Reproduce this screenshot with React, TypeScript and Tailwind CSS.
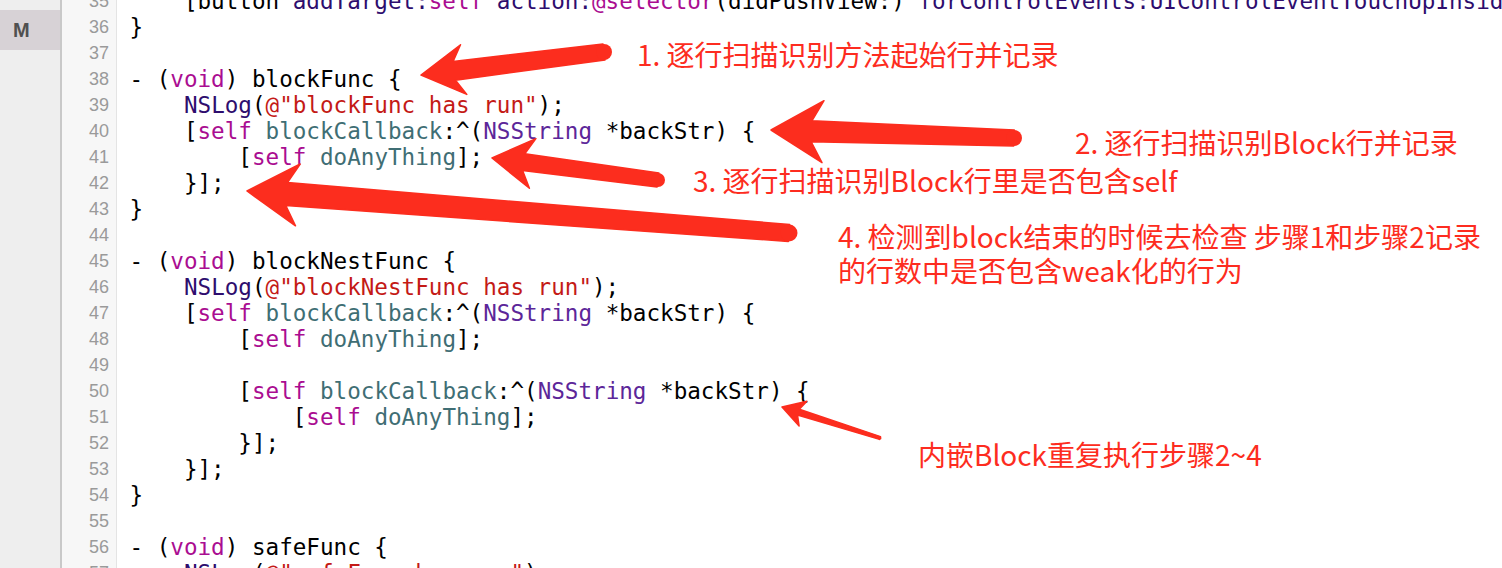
import React from 'react';

type Tok = [string, string?];

const K = '#aa0d91'; // keywords
const S = '#c41a16'; // strings
const P = '#3f6e74'; // project methods
const C = '#5c2699'; // system classes
const F = '#2e0d6e'; // system functions / methods

const lines: { n: number; toks: Tok[] }[] = [
  {
    n: 35,
    toks: [
      ['    [button '],
      ['addTarget:', F],
      ['self', K],
      [' '],
      ['action:', F],
      ['@selector', K],
      ['(didPushView:) '],
      ['forControlEvents:', F],
      ['UIControlEventTouchUpInside', F],
      ['];'],
    ],
  },
  { n: 36, toks: [['}']] },
  { n: 37, toks: [] },
  { n: 38, toks: [['- ('], ['void', K], [') blockFunc {']] },
  { n: 39, toks: [['    '], ['NSLog', F], ['('], ['@"blockFunc has run"', S], [');']] },
  { n: 40, toks: [['    ['], ['self', K], [' '], ['blockCallback', P], [':^('], ['NSString', C], [' *backStr) {']] },
  { n: 41, toks: [['        ['], ['self', K], [' '], ['doAnyThing', P], ['];']] },
  { n: 42, toks: [['    }];']] },
  { n: 43, toks: [['}']] },
  { n: 44, toks: [] },
  { n: 45, toks: [['- ('], ['void', K], [') blockNestFunc {']] },
  { n: 46, toks: [['    '], ['NSLog', F], ['('], ['@"blockNestFunc has run"', S], [');']] },
  { n: 47, toks: [['    ['], ['self', K], [' '], ['blockCallback', P], [':^('], ['NSString', C], [' *backStr) {']] },
  { n: 48, toks: [['        ['], ['self', K], [' '], ['doAnyThing', P], ['];']] },
  { n: 49, toks: [] },
  { n: 50, toks: [['        ['], ['self', K], [' '], ['blockCallback', P], [':^('], ['NSString', C], [' *backStr) {']] },
  { n: 51, toks: [['            ['], ['self', K], [' '], ['doAnyThing', P], ['];']] },
  { n: 52, toks: [['        }];']] },
  { n: 53, toks: [['    }];']] },
  { n: 54, toks: [['}']] },
  { n: 55, toks: [] },
  { n: 56, toks: [['- ('], ['void', K], [') safeFunc {']] },
  { n: 57, toks: [['    '], ['NSLog', F], ['('], ['@"safeFunc has run"', S], [');']] },
];

// tapered skitch-style arrow: tip, tail, head length, head half width, shaft width at head / tail
function Arrow({ t, e, hl, hw, w1, w2 }: { t: [number, number]; e: [number, number]; hl: number; hw: number; w1: number; w2: number }) {
  const dx = e[0] - t[0];
  const dy = e[1] - t[1];
  const len = Math.hypot(dx, dy);
  const ux = dx / len;
  const uy = dy / len;
  const nx = -uy;
  const ny = ux;
  const bx = t[0] + ux * hl;
  const by = t[1] + uy * hl;
  const jx = t[0] + ux * hl * 0.78;
  const jy = t[1] + uy * hl * 0.78;
  const pts = [
    [t[0], t[1]],
    [bx + nx * hw, by + ny * hw],
    [jx + (nx * w1) / 2, jy + (ny * w1) / 2],
    [e[0] + (nx * w2) / 2, e[1] + (ny * w2) / 2],
    [e[0] - (nx * w2) / 2, e[1] - (ny * w2) / 2],
    [jx - (nx * w1) / 2, jy - (ny * w1) / 2],
    [bx - nx * hw, by - ny * hw],
  ]
    .map((p) => p.map((v) => v.toFixed(1)).join(','))
    .join(' ');
  return (
    <g fill="#fc2d1e">
      <polygon points={pts} strokeLinejoin="round" stroke="#fc2d1e" strokeWidth={1.5} />
      <circle cx={e[0]} cy={e[1]} r={w2 / 2} />
    </g>
  );
}

const note = "absolute whitespace-nowrap text-[28px] leading-[28px] text-[#fd2c20] [font-family:'Noto_Sans_CJK_SC','Noto_Sans',sans-serif]";

export default function App() {
  return (
    <div className="relative flex h-[568px] w-[1502px] overflow-hidden bg-white">
      <aside className="w-[60px] shrink-0 bg-[#eeeeee]">
        <div className="mt-[10px] flex h-[40px] items-center bg-[#d7d2d6] pl-[13px] text-[20px] font-bold text-[#505050] [font-family:'Liberation_Sans',sans-serif]">
          M
        </div>
      </aside>
      <div className="w-[2px] shrink-0 bg-[#c9c9c9]" />

      <div className="w-[55px] shrink-0 border-r border-[#e4e4e4] bg-[#f7f7f7]">
        <div className="-mt-[12px]">
          {lines.map((l) => (
            <div
              key={l.n}
              className="h-[26px] pr-[7px] text-right text-[18px] leading-[26px] text-[#9a9a9a] [font-family:'Liberation_Sans',sans-serif]"
            >
              {l.n}
            </div>
          ))}
        </div>
      </div>

      <main className="flex-1 pl-[12.5px] text-[22.6px] text-black [font-family:'DejaVu_Sans_Mono',monospace]">
        <div className="-mt-[12px]">
          {lines.map((l) => (
            <div key={l.n} className="h-[26px] whitespace-pre leading-[26px]">
              {l.toks.map(([txt, col], i) => (
                <span key={i} style={col ? { color: col } : undefined}>
                  {txt}
                </span>
              ))}
            </div>
          ))}
        </div>
      </main>

      <svg className="pointer-events-none absolute inset-0" width={1502} height={568}>
        <Arrow t={[421, 75]} e={[604, 52]} hl={43} hw={25} w1={19} w2={16} />
        <Arrow t={[771, 130]} e={[1014, 138]} hl={52} hw={31} w1={21} w2={16} />
        <Arrow t={[492, 158]} e={[658, 180]} hl={41} hw={25} w1={17} w2={14} />
        <Arrow t={[247, 191]} e={[789, 233]} hl={51} hw={31} w1={23} w2={17} />
        <Arrow t={[782, 407]} e={[880, 438]} hl={22} hw={13} w1={6} w2={3} />
      </svg>

      <div className={note} style={{ left: 637, top: 40 }}>1. 逐行扫描识别方法起始行并记录</div>
      <div className={note} style={{ left: 1075, top: 128 }}>2. 逐行扫描识别Block行并记录</div>
      <div className={note} style={{ left: 693, top: 166 }}>3. 逐行扫描识别Block行里是否包含self</div>
      <div className={note + ' flex flex-col gap-[6px]'} style={{ left: 838, top: 222 }}>
        <span>4. 检测到block结束的时候去检查 步骤1和步骤2记录</span>
        <span>的行数中是否包含weak化的行为</span>
      </div>
      <div className={note} style={{ left: 918, top: 440 }}>内嵌Block重复执行步骤2~4</div>
    </div>
  );
}
